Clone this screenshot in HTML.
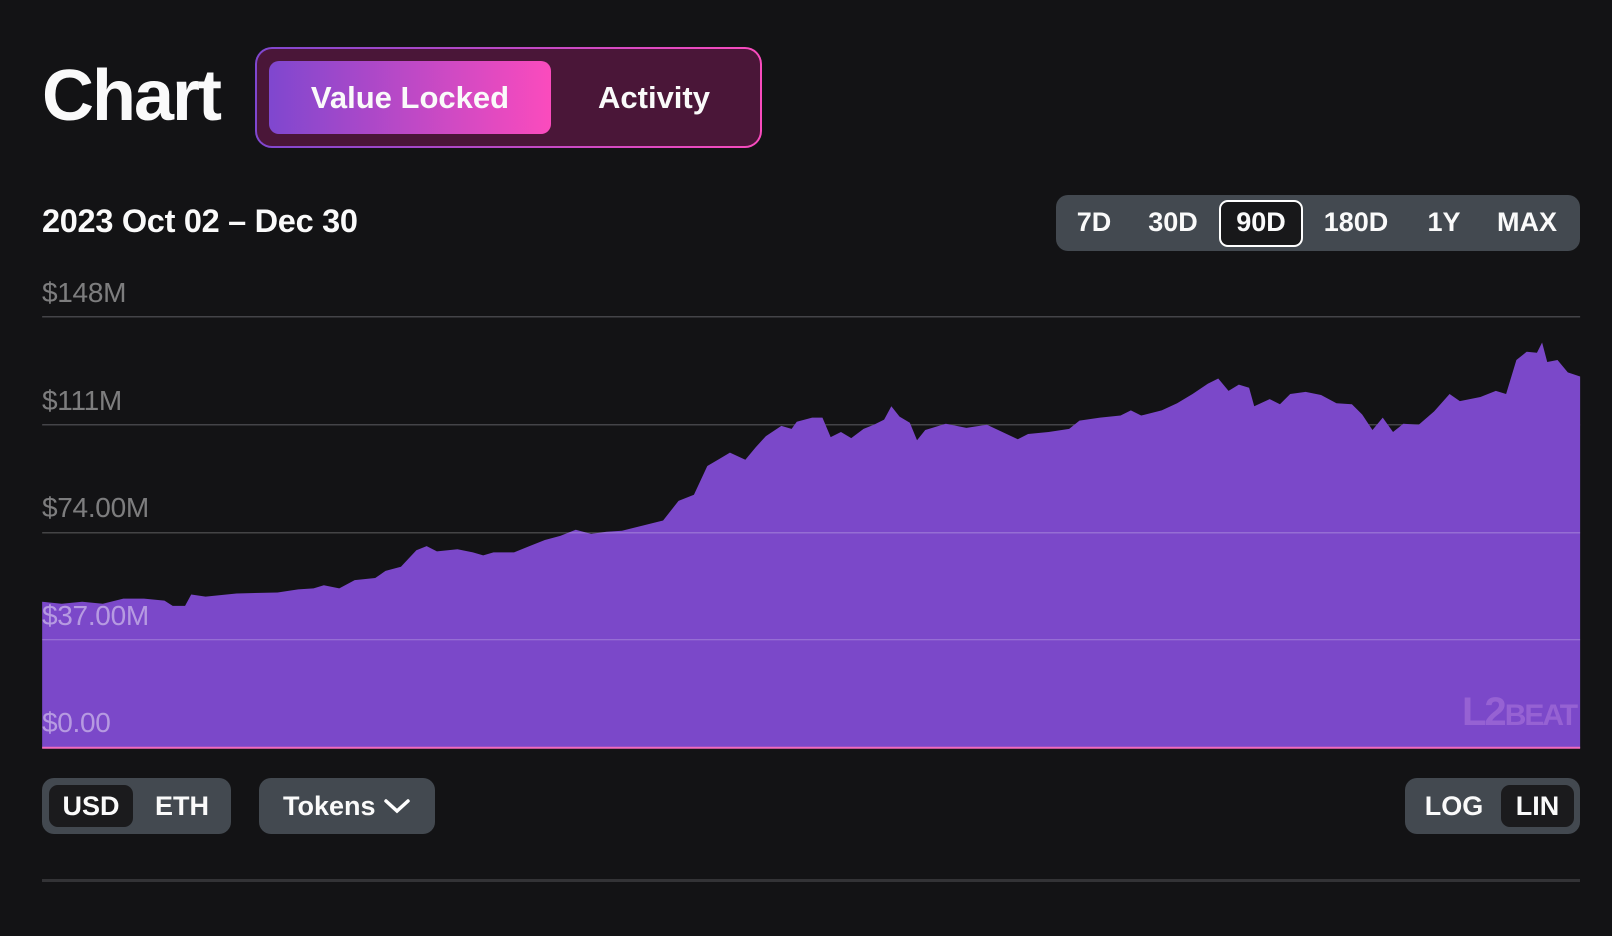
<!DOCTYPE html>
<html><head><meta charset="utf-8"><style>
*{margin:0;padding:0;box-sizing:border-box}
body{width:1612px;height:936px;background:#131315;font-family:"Liberation Sans",sans-serif;color:#fafafa;position:relative;overflow:hidden}
.a{position:absolute}
.b{font-weight:bold}
.c{display:flex;align-items:center;justify-content:center}
.lbl{position:absolute;left:42px;font-size:28px;color:rgba(255,255,255,0.45);letter-spacing:-0.3px}
.grp{background:#434950;border-radius:12px}
</style></head><body>
<div class="a b" style="left:42px;top:56px;font-size:72px;letter-spacing:-2px;line-height:80px">Chart</div>
<div class="a" style="left:255px;top:47px;width:507px;height:101px;border-radius:17px;background:linear-gradient(90deg,#7f47cf,#f94bbd);padding:2px">
 <div style="width:100%;height:100%;border-radius:15px;background:#4a1638;position:relative">
  <div class="a c b" style="left:12px;top:12px;width:282px;height:73px;border-radius:10px;background:linear-gradient(90deg,#7f47cf,#fb4bbd);font-size:31px">Value Locked</div>
  <div class="a c b" style="left:294px;top:12px;width:206px;height:73px;font-size:31px">Activity</div>
 </div>
</div>
<div class="a b" style="left:42px;top:203px;font-size:32.5px;letter-spacing:-0.3px">2023 Oct 02 – Dec 30</div>
<div class="a grp" style="left:1056px;top:195px;width:524px;height:56px"></div>
<div class="a" style="left:1219px;top:200px;width:84px;height:47px;border:2.5px solid #fff;border-radius:9px;background:#18181a"></div>
<div class="a b" style="top:207px;left:0;width:1612px;font-size:27px;line-height:30px">
 <span class="a c" style="left:1064px;width:60px">7D</span>
 <span class="a c" style="left:1138px;width:70px">30D</span>
 <span class="a c" style="left:1221px;width:80px">90D</span>
 <span class="a c" style="left:1311px;width:90px">180D</span>
 <span class="a c" style="left:1414px;width:60px">1Y</span>
 <span class="a c" style="left:1487px;width:80px">MAX</span>
</div>
<svg class="a" style="left:0;top:0" width="1612" height="936" viewBox="0 0 1568 910" preserveAspectRatio="none">
<line x1="41" y1="308" x2="1537" y2="308" stroke="#55555a" stroke-width="1"/>
<line x1="41" y1="413" x2="1537" y2="413" stroke="#55555a" stroke-width="1"/>
<polygon fill="#7b48c9" points="41,727 41,585 60,587 80,585 100,587 120,582 140,582 160,584 168,589 180,589 186,578 200,580 230,577 270,576 290,573 305,572 315,569 330,572 345,564 365,562 375,555 390,551 405,535 415,531 425,536 445,534 460,537 470,540 480,537 500,537 515,531 530,525 545,521 560,515 575,519 590,517 605,516 625,511 645,506 660,487 675,481 688,453 700,446 710,440 725,447 735,435 745,424 760,414 770,417 775,410 790,406 800,406 808,425 818,420 828,426 840,417 850,413 860,408 867,395 875,405 885,411 892,428 900,418 920,412 940,416 960,413 975,420 990,427 1000,422 1020,420 1040,417 1050,409 1070,406 1090,404 1100,399 1110,404 1130,399 1145,392 1160,383 1175,373 1185,368 1195,380 1205,374 1215,377 1220,395 1235,388 1245,393 1255,383 1270,381 1285,384 1300,392 1315,393 1325,403 1335,418 1345,406 1355,420 1365,412 1380,413 1395,400 1410,383 1420,390 1440,386 1455,380 1465,383 1475,350 1485,342 1495,343 1500,333 1505,352 1515,350 1525,362 1537,366 1537,727"/>
<line x1="41" y1="518" x2="1537" y2="518" stroke="rgba(255,255,255,0.28)" stroke-width="1"/>
<line x1="41" y1="622" x2="1537" y2="622" stroke="rgba(255,255,255,0.28)" stroke-width="1"/>
<line x1="41" y1="727" x2="1537" y2="727" stroke="#f26bbd" stroke-width="2"/>
</svg>
<div class="lbl" style="top:277px">$148M</div>
<div class="lbl" style="top:385px">$111M</div>
<div class="lbl" style="top:492px">$74.00M</div>
<div class="lbl" style="top:600px">$37.00M</div>
<div class="lbl" style="top:707px">$0.00</div>
<div class="a b" style="left:1462px;top:690px;font-size:40px;color:rgba(200,150,230,0.35);letter-spacing:-2px">L2<span style="font-size:30px">BEAT</span></div>
<div class="a grp" style="left:42px;top:778px;width:189px;height:56px"></div>
<div class="a c b" style="left:49px;top:785px;width:84px;height:42px;border-radius:9px;background:#1b1b1d;font-size:27px">USD</div>
<div class="a c b" style="left:140px;top:785px;width:84px;height:42px;font-size:27px">ETH</div>
<div class="a grp c b" style="left:259px;top:778px;width:176px;height:56px;font-size:27px">Tokens&nbsp;<svg width="28" height="20" viewBox="0 0 28 20"><path d="M3 5 L14 15 L25 5" fill="none" stroke="#fff" stroke-width="3.5" stroke-linecap="round"/></svg></div>
<div class="a grp" style="left:1405px;top:778px;width:175px;height:56px"></div>
<div class="a c b" style="left:1410px;top:785px;width:88px;height:42px;font-size:27px">LOG</div>
<div class="a c b" style="left:1501px;top:785px;width:73px;height:42px;border-radius:9px;background:#1b1b1d;font-size:27px">LIN</div>
<div class="a" style="left:42px;top:879px;width:1538px;height:3px;background:#333336"></div>
</body></html>
